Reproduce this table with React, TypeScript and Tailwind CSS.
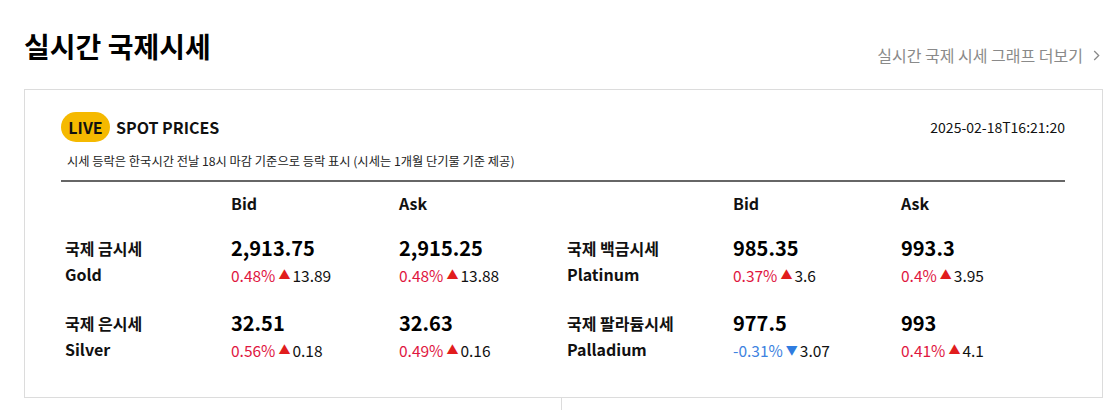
const font = { fontFamily: '"Noto Sans CJK KR", "Noto Sans", sans-serif' };

type Quote = { value: string; pct: string; diff: string; up: boolean };
type Metal = { ko: string; en: string; bid: Quote; ask: Quote };

const left: Metal[] = [
  {
    ko: "국제 금시세",
    en: "Gold",
    bid: { value: "2,913.75", pct: "0.48%", diff: "13.89", up: true },
    ask: { value: "2,915.25", pct: "0.48%", diff: "13.88", up: true },
  },
  {
    ko: "국제 은시세",
    en: "Silver",
    bid: { value: "32.51", pct: "0.56%", diff: "0.18", up: true },
    ask: { value: "32.63", pct: "0.49%", diff: "0.16", up: true },
  },
];

const right: Metal[] = [
  {
    ko: "국제 백금시세",
    en: "Platinum",
    bid: { value: "985.35", pct: "0.37%", diff: "3.6", up: true },
    ask: { value: "993.3", pct: "0.4%", diff: "3.95", up: true },
  },
  {
    ko: "국제 팔라듐시세",
    en: "Palladium",
    bid: { value: "977.5", pct: "-0.31%", diff: "3.07", up: false },
    ask: { value: "993", pct: "0.41%", diff: "4.1", up: true },
  },
];

const Price = ({ q }: { q: Quote }) => (
  <div className="flex flex-col">
    <div className="text-[20px] font-bold leading-[30px] text-black">{q.value}</div>
    <div className="flex items-center text-[15.5px] leading-[24px]">
      <span className={q.up ? "text-[#e0173f]" : "text-[#3d82e0]"}>{q.pct}</span>
      <span className={`ml-[3px] text-[12px] ${q.up ? "text-[#e11d1d]" : "text-[#2f7ce0]"}`}>
        {q.up ? "▲" : "▼"}
      </span>
      <span className="ml-[2px] text-[#111]">{q.diff}</span>
    </div>
  </div>
);

const Half = ({ rows }: { rows: Metal[] }) => (
  <div className="flex-1">
    <div className="grid grid-cols-[166px_168px_1fr] pl-[4px] pt-[10px] text-[16px] font-bold leading-[22px]">
      <div />
      <div>Bid</div>
      <div>Ask</div>
    </div>
    {rows.map((m, i) => (
      <div
        key={m.en}
        className={`grid grid-cols-[166px_168px_1fr] pl-[4px] ${i === 0 ? "mt-[19px]" : "mt-[21px]"}`}
      >
        <div className="flex flex-col pt-[2px] text-[16px] font-bold leading-[26px] text-[#111]">
          <span>{m.ko}</span>
          <span>{m.en}</span>
        </div>
        <Price q={m.bid} />
        <Price q={m.ask} />
      </div>
    ))}
  </div>
);

export default function App() {
  return (
    <div className="w-[1120px] bg-white text-[#111]" style={font}>
      <div className="flex items-end justify-between pl-6 pr-[20px] pt-[26px]">
        <h1 className="text-[28px] font-bold leading-[40px] text-black">실시간 국제시세</h1>
        <a className="mb-[-1px] flex items-center gap-[10px] text-[16px] text-[#8a8a8a]">
          실시간 국제 시세 그래프 더보기
          <svg width="7" height="11" viewBox="0 0 7 11" fill="none" stroke="#8a8a8a" strokeWidth="1.3">
            <path d="M1.2 1 5.7 5.5 1.2 10" />
          </svg>
        </a>
      </div>

      <div className="ml-6 mr-[17px] mt-[23px] h-[309px] border border-[#dcdcdc] pl-[36px] pr-[37px] pt-[22px]">
        <div className="flex items-start justify-between">
          <div>
            <div className="flex items-center">
              <span className="flex h-[30px] w-[49px] items-center justify-center rounded-full bg-[#f5b900] text-[16px] font-bold">
                LIVE
              </span>
              <span className="ml-[6px] text-[16px] font-bold">SPOT PRICES</span>
            </div>
            <p className="mt-[11px] pl-[6px] text-[12.25px] leading-[16px] text-[#222]">
              시세 등락은 한국시간 전날 18시 마감 기준으로 등락 표시 (시세는 1개월 단기물 기준 제공)
            </p>
          </div>
          <span className="mt-[5px] text-[14px] leading-[20px] text-[#111]">2025-02-18T16:21:20</span>
        </div>
        <div className="mt-[11px] h-[2px] bg-[#666]" />
        <div className="flex">
          <Half rows={left} />
          <Half rows={right} />
        </div>
      </div>

      <div className="ml-6 flex h-[20px]">
        <div className="w-[538px] border-r border-[#dcdcdc]" />
      </div>
    </div>
  );
}
